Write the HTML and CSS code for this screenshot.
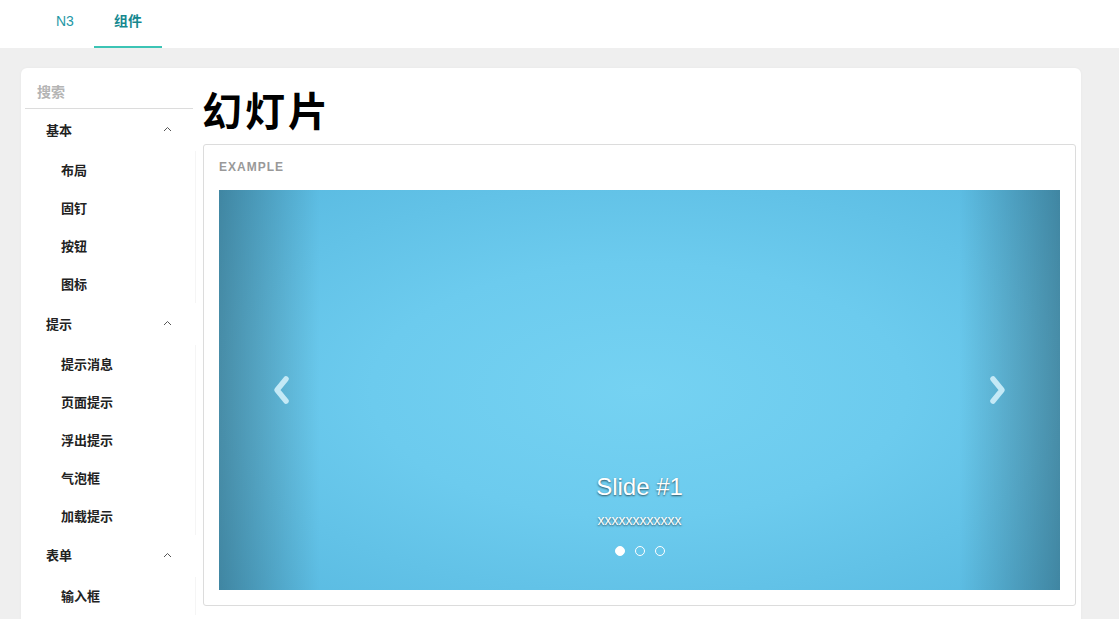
FILE: index.html
```html
<!DOCTYPE html>
<html>
    <head>
        <meta charset="utf-8">
        <link rel="stylesheet" href="styles.css">
    </head>
    <body>
        <div class="topBar">
            <a class="tab">N3</a>
            <a class="tab active">组件</a>
        </div>

        <div class="page">
            <div class="card">
                <div class="sideBar">
                    <div class="search">搜索</div>

                    <div class="menuGroup">
                        <div class="menuTitle">基本 <span class="caret"></span></div>
                        <ul class="subMenu">
                            <li>布局</li>
                            <li>固钉</li>
                            <li>按钮</li>
                            <li>图标</li>
                        </ul>
                    </div>
                    <div class="menuGroup">
                        <div class="menuTitle">提示 <span class="caret"></span></div>
                        <ul class="subMenu">
                            <li>提示消息</li>
                            <li>页面提示</li>
                            <li>浮出提示</li>
                            <li>气泡框</li>
                            <li>加载提示</li>
                        </ul>
                    </div>
                    <div class="menuGroup">
                        <div class="menuTitle short">表单 <span class="caret"></span></div>
                        <ul class="subMenu">
                            <li>输入框</li>
                        </ul>
                    </div>
                </div>

                <div class="content">
                    <h1 class="pageTitle">幻灯片</h1>
                    <div class="example">
                        <div class="exampleLabel">EXAMPLE</div>
                        <div class="carousel">
                            <div class="control left">
                                <svg width="22" height="32" viewBox="0 0 22 32"><polyline points="15,5 6,16 15,27" fill="none" stroke="#c4e9f6" stroke-width="5.5" stroke-linecap="round" stroke-linejoin="round"/></svg>
                            </div>
                            <div class="control right">
                                <svg width="22" height="32" viewBox="0 0 22 32"><polyline points="7,5 16,16 7,27" fill="none" stroke="#c4e9f6" stroke-width="5.5" stroke-linecap="round" stroke-linejoin="round"/></svg>
                            </div>
                            <div class="caption">
                                <h3>Slide #1</h3>
                                <p>xxxxxxxxxxxx</p>
                            </div>
                            <div class="indicators">
                                <span class="dot on"></span>
                                <span class="dot"></span>
                                <span class="dot"></span>
                            </div>
                        </div>
                    </div>
                </div>
            </div>
        </div>
    </body>
</html>
```

FILE: styles.css
```css
body {
    margin: 0;
    height: 100vh;
    overflow: hidden;
    background: #efefef;
    font-family: "Liberation Sans", "Noto Sans CJK SC", sans-serif;
    color: #222;
}

.topBar {
    display: flex;
    height: 48px;
    padding-left: 36px;
    background: white;
    font-size: 14px;
}

.tab {
    display: block;
    padding: 0 20px;
    line-height: 42px;
    height: 46px;
    color: #1f98a6;
    border-bottom: 2px solid transparent;
}

.tab.active {
    color: #16888f;
    font-weight: bold;
    border-bottom-color: #3cc4b5;
}

.page {
    padding: 20px 38px 0 21px;
}

.card {
    display: flex;
    background: white;
    border-radius: 6px;
    padding: 11px 5px 0 4px;
    height: 600px;
    box-shadow: 0 0 3px rgba(0, 0, 0, 0.04);
}

.sideBar {
    width: 168px;
    flex-shrink: 0;
    margin-right: 10px;
}

.search {
    height: 29px;
    line-height: 26px;
    padding-left: 12px;
    font-size: 14px;
    font-weight: bold;
    color: #b4b4b4;
    border-bottom: 1px solid #dcdcdc;
}

.menuTitle {
    display: flex;
    justify-content: space-between;
    align-items: center;
    height: 40px;
    padding: 0 21px 2px 21px;
    font-size: 13px;
    font-weight: bold;
    color: #222;
}

.menuTitle.short {
    height: 39px;
    padding-bottom: 3px;
}

.caret {
    width: 9px;
    height: 8px;
    background: url("data:image/svg+xml;utf8,<svg xmlns='http://www.w3.org/2000/svg' width='9' height='8'><polyline points='1,6 4.5,2.5 8,6' fill='none' stroke='%23555' stroke-width='1'/></svg>") no-repeat center;
}

.subMenu {
    list-style: none;
    margin: 0 -3px 0 0;
    padding: 0;
    border-right: 1px solid #f5f5f5;
}

.subMenu li {
    height: 36px;
    line-height: 36px;
    padding: 2px 0 0 36px;
    font-size: 13px;
    font-weight: bold;
    color: #222;
}

.content {
    flex: 1;
}

.pageTitle {
    margin: 6px 0 11px -1px;
    font-family: "Noto Sans CJK SC", sans-serif;
    font-size: 40px;
    line-height: 48px;
    font-weight: bold;
    letter-spacing: 3px;
    color: #000;
}

.example {
    border: 1px solid #dcdcdc;
    border-radius: 3px;
    padding: 13px 15px 15px 15px;
}

.exampleLabel {
    font-size: 12px;
    line-height: 18px;
    font-weight: bold;
    letter-spacing: 1px;
    color: #999;
    margin: 0 0 14px 0;
}

.carousel {
    position: relative;
    height: 400px;
    background: radial-gradient(ellipse at center, #75d2f2 0%, #6ccbee 45%, #58b9e0 100%);
    overflow: hidden;
}

.control {
    position: absolute;
    top: 0;
    bottom: 0;
    width: 15%;
    display: flex;
    align-items: center;
    justify-content: center;
}

.control.left {
    left: 0;
    background: linear-gradient(to right, rgba(0, 0, 0, 0.28), rgba(0, 0, 0, 0) 80%);
}

.control.right {
    right: 0;
    background: linear-gradient(to left, rgba(0, 0, 0, 0.28), rgba(0, 0, 0, 0) 80%);
}

.caption {
    position: absolute;
    left: 0;
    right: 0;
    bottom: 60px;
    text-align: center;
    color: white;
    text-shadow: 0 1px 2px rgba(0, 0, 0, 0.6);
}

.caption h3 {
    margin: 0 0 8px 0;
    font-size: 24px;
    line-height: 30px;
    font-weight: normal;
}

.caption p {
    margin: 0;
    font-size: 14px;
    line-height: 20px;
}

.indicators {
    position: absolute;
    left: 0;
    right: 0;
    bottom: 34px;
    display: flex;
    justify-content: center;
    gap: 10px;
}

.dot {
    width: 8px;
    height: 8px;
    border: 1px solid white;
    border-radius: 50%;
}

.dot.on {
    background: white;
}
```
